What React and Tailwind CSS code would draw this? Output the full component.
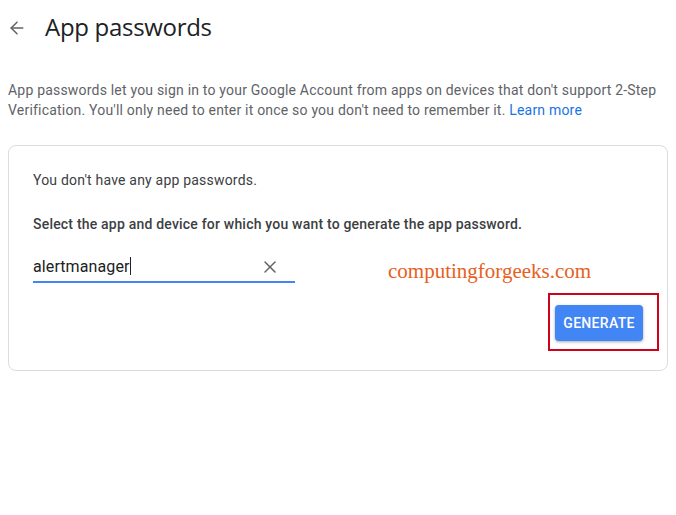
import { ArrowLeft, X } from "lucide-react";

export default function App() {
  return (
    <div className="relative w-[676px] h-[515px] bg-white font-['Roboto',sans-serif] text-[#3c4043]">
      {/* Header */}
      <div className="flex items-center h-[56px] pl-[7px]">
        <ArrowLeft className="w-[20px] h-[20px] text-[#5f6368]" strokeWidth={1.8} />
        <h1 className="ml-[18px] text-[24px] font-['Open_Sans',sans-serif] text-[#202124] tracking-[-0.3px] leading-none -mt-[2px]">
          App passwords
        </h1>
      </div>

      {/* Description */}
      <p className="mt-[24px] px-[8px] text-[14px] leading-[20px] tracking-[0.2px] text-[#5f6368]">
        App passwords let you sign in to your Google Account from apps on devices that don't support 2-Step
        Verification. You'll only need to enter it once so you don't need to remember it.{" "}
        <span className="text-[#1a73e8]">Learn more</span>
      </p>

      {/* Card */}
      <div className="relative mx-[8px] mt-[25px] w-[660px] border border-[#dadce0] rounded-[8px] pl-[24px] pr-[24px] pt-[24px] pb-[29px]">
        <p className="text-[14px] leading-[20px] tracking-[0.2px] text-[#3c4043]">You don't have any app passwords.</p>
        <p className="mt-[24px] text-[14px] leading-[20px] tracking-[0.2px] font-medium text-[#3c4043]">
          Select the app and device for which you want to generate the app password.
        </p>

        <div className="mt-[22px] w-[262px] flex items-center border-b-2 border-[#4285f4] pb-[3px]">
          <span className="flex-1 text-[16px] leading-[22px] tracking-[0.1px] text-[#202124]">
            alertmanager<span className="inline-block w-px h-[18px] bg-[#202124] align-[-3px]" />
          </span>
          <X className="w-[20px] h-[20px] text-[#5f6368] mr-[15px]" strokeWidth={1.8} />
        </div>

        <div className="flex justify-end mt-[22px]">
          <button className="w-[88px] h-[36px] rounded-[4px] bg-[#4285f4] text-white text-[14px] font-medium tracking-[0.3px] shadow-[0_1px_3px_rgba(0,0,0,0.35)]">
            GENERATE
          </button>
        </div>

        {/* Watermark */}
        <span className="absolute left-[379px] top-[115px] text-[21px] leading-none font-['Liberation_Serif',serif] text-[#e8601c]">
          computingforgeeks.com
        </span>

        {/* Highlight box */}
        <div className="absolute left-[539px] top-[147px] w-[111px] h-[58px] border-2 border-[#d0021b]" />
      </div>
    </div>
  );
}
